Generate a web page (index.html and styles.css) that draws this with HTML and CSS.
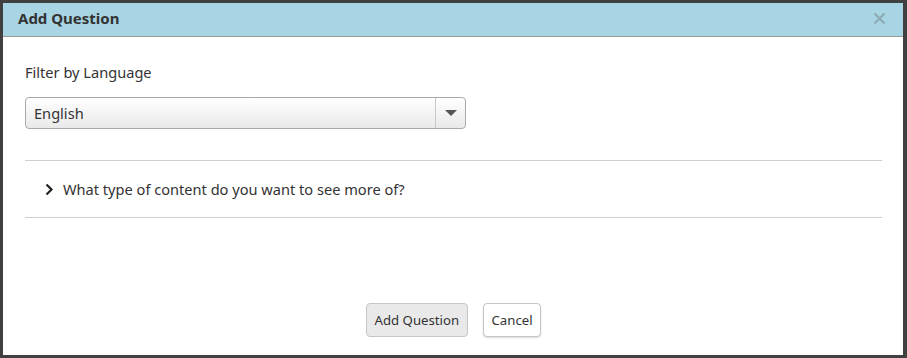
FILE: index.html
```html
<!DOCTYPE html>
<html>
<head>
<meta charset="utf-8">
<link rel="stylesheet" href="styles.css">
</head>
<body>
<div class="dialog">
  <div class="header">
    <span class="title">Add Question</span>
    <svg class="close" width="13" height="13" viewBox="0 0 13 13"><path d="M1.5 1.5 L11.5 11.5 M11.5 1.5 L1.5 11.5" stroke="#8eaab4" stroke-width="2.2"/></svg>
  </div>
  <div class="content">
    <div class="label">Filter by Language</div>
    <div class="select">
      <span class="value">English</span>
      <span class="arrow"><span class="tri"></span></span>
    </div>
    <div class="group">
      <svg class="chev" width="9" height="13" viewBox="0 0 9 13"><path d="M1.5 1.5 L6.5 6.5 L1.5 11.5" fill="none" stroke="#222" stroke-width="2.2"/></svg>
      <span class="qtext">What type of content do you want to see more of?</span>
    </div>
    <div class="spacer"></div>
    <div class="actions">
      <button class="btn primary">Add Question</button>
      <button class="btn secondary">Cancel</button>
    </div>
  </div>
</div>
</body>
</html>
```
FILE: styles.css
```css
html, body { margin: 0; padding: 0; }
body {
  background: #404040;
  width: 907px;
  height: 358px;
  padding: 3px 4px 3px 3px;
  box-sizing: border-box;
  font-family: "Noto Sans", "Open Sans", sans-serif;
  color: #333;
}
.dialog {
  width: 900px;
  height: 352px;
  background: #fff;
  display: flex;
  flex-direction: column;
}
.header {
  height: 34px;
  box-sizing: border-box;
  padding: 0 17px 3px 15px;
  background: #a7d5e4;
  border-bottom: 1px solid #9a9a9a;
  display: flex;
  align-items: center;
  justify-content: space-between;
}
.title {
  font-weight: bold;
  font-size: 15px;
  color: #333;
}
.close { display: block; }
.content {
  flex: 1;
  display: flex;
  flex-direction: column;
  padding: 25px 21px 18px 22px;
}
.label {
  font-size: 14.6px;
  color: #333;
  line-height: 20px;
}
.select {
  margin-top: 15px;
  width: 441px;
  height: 32px;
  box-sizing: border-box;
  border: 1px solid #a9a9a9;
  border-radius: 4px;
  background: linear-gradient(#ffffff, #e9e9e9);
  display: flex;
  align-items: center;
}
.value {
  flex: 1;
  font-size: 14.6px;
  padding-left: 8px;
  color: #333;
}
.arrow {
  width: 29px;
  height: 100%;
  border-left: 1px solid #c8c8c8;
  display: flex;
  align-items: center;
  justify-content: center;
}
.tri {
  width: 0;
  height: 0;
  border-left: 6px solid transparent;
  border-right: 6px solid transparent;
  border-top: 6px solid #555;
}
.group {
  margin-top: 31px;
  border-top: 1px solid #cfcfcf;
  border-bottom: 1px solid #cfcfcf;
  height: 56px;
  display: flex;
  align-items: center;
  padding-left: 20px;
}
.chev { margin-right: 9px; margin-top: 1px; }
.qtext { font-size: 14.6px; color: #333; }
.spacer { flex: 1; }
.actions {
  display: flex;
  justify-content: center;
  gap: 15px;
  padding-right: 1px;
}
.btn {
  font-family: inherit;
  font-size: 13.2px;
  color: #333;
  height: 34px;
  border-radius: 4px;
  padding: 0 8px;
  white-space: nowrap;
  cursor: pointer;
}
.primary {
  background: #e9e9e9;
  border: 1px solid #c6c6c6;
  width: 102px;
}
.secondary {
  background: #fff;
  border: 1px solid #c6c6c6;
  box-shadow: 0 1px 2px rgba(0,0,0,0.15);
  width: 58px;
}
```
